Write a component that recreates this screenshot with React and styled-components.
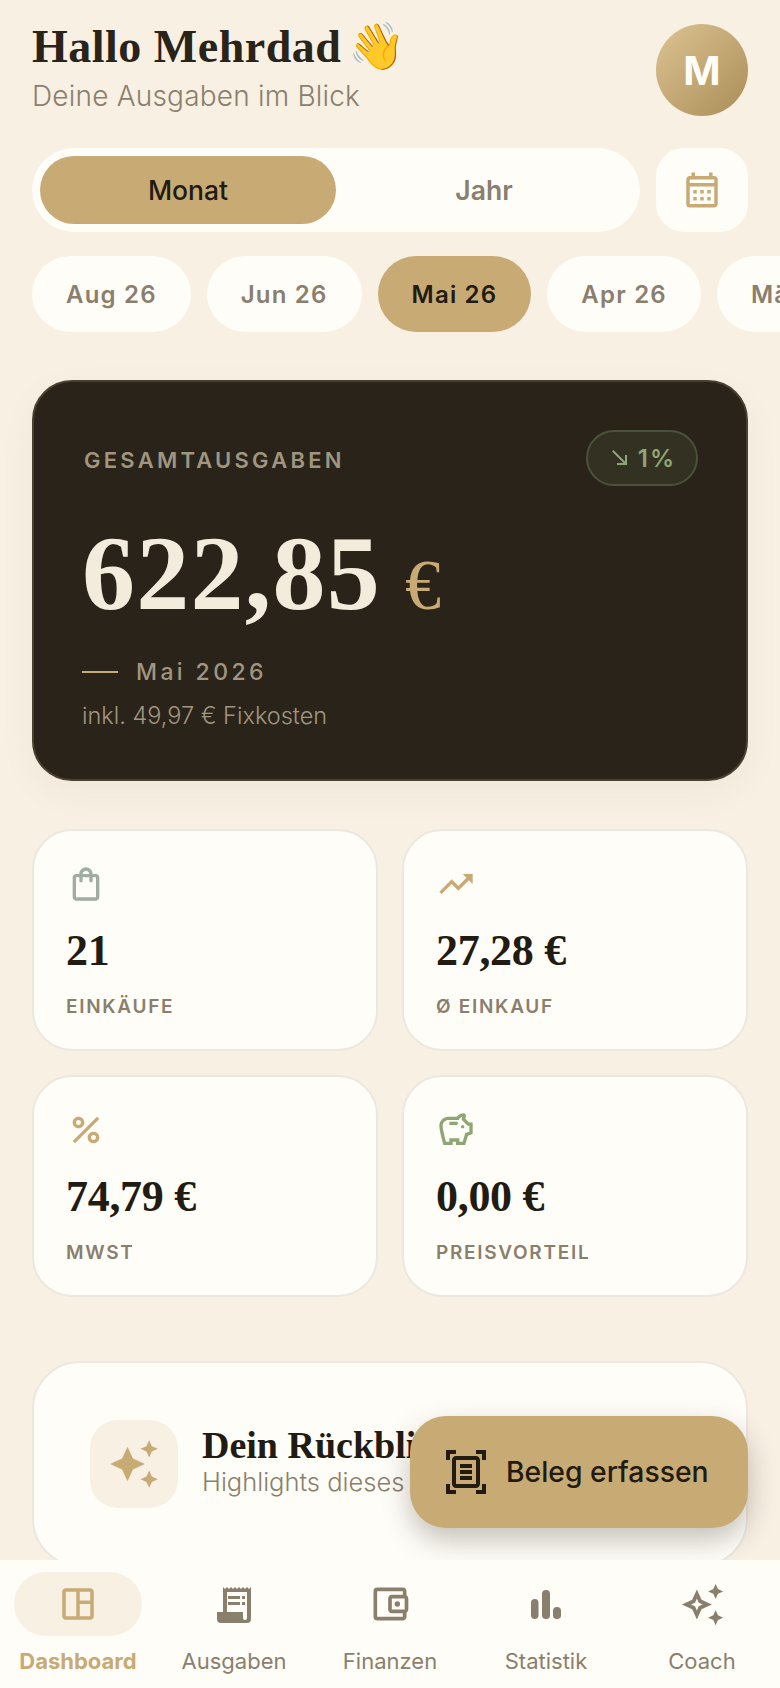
import React from "react";
import styled, { createGlobalStyle } from "styled-components";
import {
  MdOutlineCalendarMonth,
  MdSouthEast,
  MdOutlineShoppingBag,
  MdTrendingUp,
  MdPercent,
  MdOutlineSavings,
  MdAutoAwesome,
  MdOutlineAutoAwesome,
  MdOutlineDocumentScanner,
  MdOutlineSpaceDashboard,
  MdOutlineAccountBalanceWallet,
} from "react-icons/md";

const serif = `"Liberation Serif", "DejaVu Serif", serif`;

const GlobalStyle = createGlobalStyle`
  html, body {
    margin: 0;
    padding: 0;
    background: #f7f0e3;
  }
  * {
    box-sizing: border-box;
  }
  body {
    font-family: Inter, "Liberation Sans", sans-serif;
  }
`;

const Screen = styled.div`
  position: relative;
  display: flex;
  flex-direction: column;
  width: 780px;
  height: 1688px;
  overflow: hidden;
  background: #f7f0e3;
`;

const Scroll = styled.main`
  flex: 1;
  min-height: 0;
  overflow: hidden;
  padding: 24px 32px 0;
`;

const Header = styled.header`
  display: flex;
  justify-content: space-between;
  align-items: flex-start;
  height: 92px;
`;

const Title = styled.h1`
  margin: 0;
  height: 46px;
  font-family: ${serif};
  font-size: 46px;
  line-height: 46px;
  font-weight: 700;
  color: #2a2319;
  letter-spacing: 0.5px;
  white-space: nowrap;
`;

const Wave = styled.span`
  margin-left: -5px;
  letter-spacing: 0;
`;

const Sub = styled.div`
  margin-top: 8px;
  font-size: 28px;
  line-height: 36px;
  font-weight: 300;
  letter-spacing: 0.2px;
  color: #8a7f6d;
`;

const Avatar = styled.div`
  display: flex;
  justify-content: center;
  align-items: center;
  width: 92px;
  height: 92px;
  border-radius: 50%;
  background: linear-gradient(135deg, #dcc391, #ab8e59);
  color: #fffdf8;
  font-size: 40px;
  font-weight: 700;
`;

const ToggleRow = styled.div`
  display: flex;
  gap: 16px;
  margin-top: 32px;
`;

const Toggle = styled.div`
  flex: 1;
  display: flex;
  height: 84px;
  padding: 8px;
  border-radius: 42px;
  background: #fffdf8;
`;

const ToggleItem = styled.div`
  flex: 1;
  display: flex;
  justify-content: center;
  align-items: center;
  border-radius: 34px;
  font-size: 26.5px;
  font-weight: ${(props) => (props.active ? 500 : 600)};
  color: ${(props) => (props.active ? "#211b12" : "#8a7f6d")};
  background: ${(props) => (props.active ? "#c8aa75" : "transparent")};
`;

const CalendarButton = styled.div`
  display: flex;
  justify-content: center;
  align-items: center;
  width: 92px;
  height: 84px;
  border-radius: 28px;
  background: #fffdf8;
  color: #c8aa75;
  font-size: 42px;
`;

const Chips = styled.div`
  display: flex;
  gap: 16px;
  margin-top: 24px;
  margin-right: -32px;
  overflow: hidden;
`;

const Chip = styled.div`
  flex: none;
  display: flex;
  align-items: center;
  height: 76px;
  padding: 0 34px;
  border-radius: 38px;
  font-size: 24px;
  font-weight: 600;
  letter-spacing: 1.2px;
  color: ${(props) => (props.active ? "#211b12" : "#8a7f6d")};
  background: ${(props) => (props.active ? "#c8aa75" : "#fffdf8")};
`;

const Hero = styled.section`
  height: 401px;
  margin-top: 48px;
  padding: 48px;
  border: 2px solid #4a4030;
  border-radius: 40px;
  background: #2a2319;
  box-shadow: 0 12px 40px rgba(43, 36, 25, 0.04);
`;

const HeroTop = styled.div`
  display: flex;
  justify-content: space-between;
  align-items: center;
`;

const HeroLabel = styled.div`
  margin: 4px 0 0 2px;
  font-size: 22px;
  font-weight: 600;
  letter-spacing: 3.25px;
  color: #a09680;
`;

const Badge = styled.div`
  display: flex;
  align-items: center;
  gap: 6px;
  height: 56px;
  padding: 0 20px;
  border: 2px solid #4a5239;
  border-radius: 28px;
  background: #333122;
  color: #8ea574;
  font-size: 24px;
  font-weight: 600;
  letter-spacing: 2px;
`;

const Amount = styled.div`
  display: flex;
  align-items: baseline;
  gap: 24px;
  margin-top: 32px;
  font-family: ${serif};
  font-size: 106px;
  line-height: 112px;
  font-weight: 700;
  letter-spacing: 1.25px;
  color: #f3ebdc;
`;

const Currency = styled.span`
  font-size: 72px;
  font-weight: 400;
  color: #c8aa75;
`;

const PeriodRow = styled.div`
  display: flex;
  align-items: center;
  gap: 18px;
  margin-top: 17px;
`;

const Dash = styled.span`
  width: 36px;
  height: 2px;
  background: #c8aa75;
`;

const Period = styled.span`
  font-size: 23px;
  font-weight: 500;
  letter-spacing: 3.4px;
  color: #a09680;
`;

const Note = styled.div`
  margin-top: 15px;
  font-size: 23.5px;
  font-weight: 300;
  color: #a09680;
`;

const Stats = styled.div`
  display: grid;
  grid-template-columns: 1fr 1fr;
  gap: 24px;
  margin-top: 48px;
`;

const StatCard = styled.div`
  display: flex;
  flex-direction: column;
  align-items: flex-start;
  height: 222px;
  padding: 33px 32px 0;
  border: 2px solid #ece8e0;
  border-radius: 40px;
  background: #fffdf8;
`;

const StatIcon = styled.div`
  display: flex;
  height: 40px;
  font-size: 40px;
  color: ${(props) => props.color};
`;

const StatValue = styled.div`
  margin-top: 21px;
  font-family: ${serif};
  font-size: 44px;
  line-height: 52px;
  font-weight: 700;
  letter-spacing: -0.3px;
  color: #211b12;
`;

const StatLabel = styled.div`
  margin-top: 18px;
  font-size: 19px;
  font-weight: 600;
  letter-spacing: 1.7px;
  color: #8a7f6d;
`;

const Recap = styled.section`
  display: flex;
  align-items: center;
  gap: 24px;
  height: 206px;
  margin-top: 64px;
  padding: 0 56px;
  border: 2px solid #ece8e0;
  border-radius: 48px;
  background: #fffdf8;
`;

const RecapIcon = styled.div`
  display: flex;
  justify-content: center;
  align-items: center;
  width: 88px;
  height: 88px;
  border-radius: 28px;
  background: #f7f0e3;
  color: #c8aa75;
  font-size: 52px;
`;

const RecapText = styled.div`
  margin-bottom: 6px;
`;

const RecapTitle = styled.div`
  font-family: ${serif};
  font-size: 38px;
  line-height: 42px;
  font-weight: 700;
  color: #211b12;
  white-space: nowrap;
`;

const RecapSub = styled.div`
  font-size: 25.5px;
  line-height: 32px;
  font-weight: 300;
  color: #8a7f6d;
  white-space: nowrap;
`;

const Fab = styled.button`
  position: absolute;
  right: 32px;
  top: 1416px;
  display: flex;
  align-items: center;
  gap: 16px;
  width: 338px;
  height: 112px;
  padding: 0 24px 0 32px;
  border: 0;
  border-radius: 36px;
  background: #c8aa75;
  color: #211b12;
  font-family: inherit;
  font-size: 28.3px;
  font-weight: 500;
  box-shadow: 0 12px 28px rgba(43, 36, 25, 0.28);
  white-space: nowrap;
`;

const Nav = styled.nav`
  flex: none;
  position: relative;
  display: grid;
  grid-template-columns: repeat(5, 1fr);
  height: 128px;
  padding-top: 12px;
  background: #fffdf8;
`;

const NavItem = styled.div`
  display: flex;
  flex-direction: column;
  align-items: center;
  font-size: 22px;
  font-weight: ${(props) => (props.active ? 700 : 400)};
  color: ${(props) => (props.active ? "#c8aa75" : "#8a7f6d")};
`;

const NavIcon = styled.div`
  display: flex;
  justify-content: center;
  align-items: center;
  width: 128px;
  height: 64px;
  border-radius: 32px;
  font-size: 42px;
  background: ${(props) => (props.active ? "#f7f0e3" : "transparent")};
`;

const NavLabel = styled.span`
  margin-top: 11px;
  line-height: 28px;
  white-space: nowrap;
`;

const ReceiptIcon = () => (
  <svg width="42" height="42" viewBox="0 0 42 42" fill="currentColor">
    <path
      fillRule="evenodd"
      d="M10 4l2 2 2-2 2 2 2-2 2 2 2-2 2 2 2-2 2 2 2-2 2 2 2-2 2 2 2-2V36a4 4 0 0 1-4 4H8a4 4 0 0 1-4-4V29h6V4zM14 9V29H30V35a2 2 0 0 0 4 0V9H14z"
    />
    <rect x="15" y="13" width="12" height="3" />
    <rect x="29" y="13" width="3" height="3" />
    <rect x="15" y="19" width="12" height="3" />
    <rect x="29" y="19" width="3" height="3" />
  </svg>
);

const BarsIcon = () => (
  <svg width="42" height="42" viewBox="0 0 42 42" fill="currentColor">
    <rect x="6" y="16" width="7.500" height="20" rx="3.700" />
    <rect x="17" y="7" width="8" height="29" rx="3.800" />
    <rect x="28" y="24" width="8" height="12" rx="3.800" />
  </svg>
);

const monthChips = ["Aug 26", "Jun 26", "Mai 26", "Apr 26", "Mär 26"];

const statCards = [
  { icon: <MdOutlineShoppingBag />, color: "#a0ada2", value: "21", label: "EINKÄUFE" },
  { icon: <MdTrendingUp />, color: "#c8aa75", value: "27,28 €", label: "Ø EINKAUF" },
  { icon: <MdPercent />, color: "#c8aa75", value: "74,79 €", label: "MWST" },
  { icon: <MdOutlineSavings />, color: "#8ea574", value: "0,00 €", label: "PREISVORTEIL" },
];

const navItems = [
  { icon: <MdOutlineSpaceDashboard />, label: "Dashboard", active: true },
  { icon: <ReceiptIcon />, label: "Ausgaben" },
  { icon: <MdOutlineAccountBalanceWallet size={44} />, label: "Finanzen" },
  { icon: <BarsIcon />, label: "Statistik" },
  { icon: <MdOutlineAutoAwesome size={45} />, label: "Coach" },
];

const App = () => {
  return (
    <Screen>
      <GlobalStyle />
      <Scroll>
        <Header>
          <div>
            <Title>
              Hallo Mehrdad <Wave>👋</Wave>
            </Title>
            <Sub>Deine Ausgaben im Blick</Sub>
          </div>
          <Avatar>M</Avatar>
        </Header>

        <ToggleRow>
          <Toggle>
            <ToggleItem active>Monat</ToggleItem>
            <ToggleItem>Jahr</ToggleItem>
          </Toggle>
          <CalendarButton>
            <MdOutlineCalendarMonth />
          </CalendarButton>
        </ToggleRow>

        <Chips>
          {monthChips.map((chip) => (
            <Chip key={chip} active={chip === "Mai 26"}>
              {chip}
            </Chip>
          ))}
        </Chips>

        <Hero>
          <HeroTop>
            <HeroLabel>GESAMTAUSGABEN</HeroLabel>
            <Badge>
              <MdSouthEast />
              1%
            </Badge>
          </HeroTop>
          <Amount>
            622,85 <Currency>€</Currency>
          </Amount>
          <PeriodRow>
            <Dash />
            <Period>Mai 2026</Period>
          </PeriodRow>
          <Note>inkl. 49,97 € Fixkosten</Note>
        </Hero>

        <Stats>
          {statCards.map((card) => (
            <StatCard key={card.label}>
              <StatIcon color={card.color}>{card.icon}</StatIcon>
              <StatValue>{card.value}</StatValue>
              <StatLabel>{card.label}</StatLabel>
            </StatCard>
          ))}
        </Stats>

        <Recap>
          <RecapIcon>
            <MdAutoAwesome />
          </RecapIcon>
          <RecapText>
            <RecapTitle>Dein Rückblick</RecapTitle>
            <RecapSub>Highlights dieses Monats</RecapSub>
          </RecapText>
        </Recap>
      </Scroll>

      <Fab>
        <MdOutlineDocumentScanner size={48} />
        Beleg erfassen
      </Fab>

      <Nav>
        {navItems.map((item) => (
          <NavItem key={item.label} active={item.active}>
            <NavIcon active={item.active}>{item.icon}</NavIcon>
            <NavLabel>{item.label}</NavLabel>
          </NavItem>
        ))}
      </Nav>
    </Screen>
  );
};

export default App;
